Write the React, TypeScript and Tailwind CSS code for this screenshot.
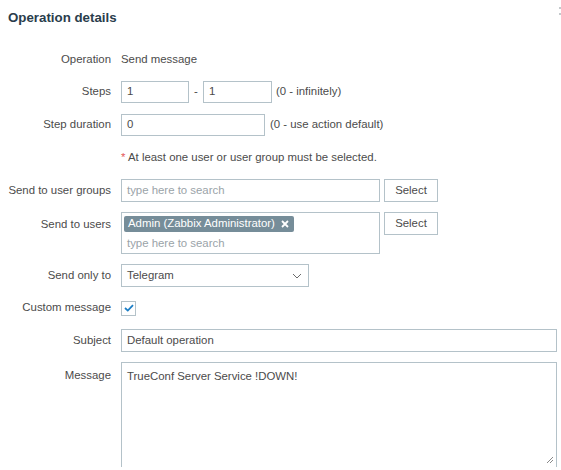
import React from "react";

const Label = ({ children }: { children: React.ReactNode }) => (
  <div className="w-[111px] shrink-0 text-right text-[#4b4b4b]">{children}</div>
);

export default function App() {
  return (
    <div className="relative w-[561px] h-[470px] overflow-hidden bg-white text-[11.4px] text-[#4b4b4b]" style={{ fontFamily: '"Liberation Sans", Arial, sans-serif' }}>
      <svg width="3" height="10" viewBox="0 0 3 10" className="absolute right-0 top-[6px]">
        <rect x="1" y="1" width="2" height="2" fill="#c4c9cc" />
        <rect x="1" y="7" width="2" height="2" fill="#c4c9cc" />
      </svg>
      <div className="pl-[8px] pt-[10px] text-[13.3px] font-bold text-[#2a3d4c] leading-[16px]">Operation details</div>
      <div className="flex flex-col">
        {/* Operation */}
        <div className="mt-[23px] flex h-[22px] items-center gap-[10px]">
          <Label>Operation</Label>
          <div>Send message</div>
        </div>
        {/* Steps */}
        <div className="mt-[10px] flex h-[22px] items-center gap-[10px]">
          <Label>Steps</Label>
          <div className="flex items-center">
            <div className="flex h-[22px] w-[68px] items-center border border-[#b4c2c9] pl-[5px]">1</div>
            <div className="w-[14px] text-center">-</div>
            <div className="flex h-[22px] w-[69px] items-center border border-[#b4c2c9] pl-[5px]">1</div>
            <div className="ml-[4px]">(0 - infinitely)</div>
          </div>
        </div>
        {/* Step duration */}
        <div className="mt-[11px] flex h-[22px] items-center gap-[10px]">
          <Label>Step duration</Label>
          <div className="flex items-center">
            <div className="flex h-[22px] w-[144px] items-center border border-[#b4c2c9] pl-[5px]">0</div>
            <div className="ml-[5px]">(0 - use action default)</div>
          </div>
        </div>
        {/* Asterisk */}
        <div className="mt-[11px] flex h-[22px] items-center gap-[10px]">
          <div className="w-[111px] shrink-0" />
          <div>
            <span className="text-[#e45959]">*</span> At least one user or user group must be selected.
          </div>
        </div>
        {/* User groups */}
        <div className="mt-[10px] flex h-[23px] items-center gap-[10px]">
          <Label>Send to user groups</Label>
          <div className="flex items-center gap-[4px]">
            <div className="flex h-[23px] w-[259px] items-center border border-[#b4c2c9] pl-[5px] text-[#9aa3a8]">type here to search</div>
            <div className="flex h-[23px] w-[54px] items-center justify-center border border-[#b4c2c9] text-[#4b4b4b]">Select</div>
          </div>
        </div>
        {/* Users */}
        <div className="mt-[10px] flex items-start gap-[10px]">
          <div className="w-[111px] shrink-0 pt-[4px] text-right">Send to users</div>
          <div className="flex items-start gap-[4px]">
            <div className="h-[42px] w-[259px] border border-[#b4c2c9] px-[2px] pt-[2px]">
              <div className="inline-flex h-[16px] items-center gap-[6px] rounded-[2px] bg-[#768d99] px-[4px] text-white">
                <span>Admin (Zabbix Administrator)</span>
                <svg width="8" height="8" viewBox="0 0 8 8" className="mr-[1px]">
                  <path d="M1 1L7 7M7 1L1 7" stroke="white" strokeWidth="1.8" />
                </svg>
              </div>
              <div className="mt-[3px] pl-[3px] text-[#9aa3a8]">type here to search</div>
            </div>
            <div className="flex h-[23px] w-[54px] items-center justify-center border border-[#b4c2c9] text-[#4b4b4b]">Select</div>
          </div>
        </div>
        {/* Send only to */}
        <div className="mt-[10px] flex h-[23px] items-center gap-[10px]">
          <Label>Send only to</Label>
          <div className="flex h-[23px] w-[188px] items-center justify-between border border-[#b4c2c9] pl-[5px] pr-[6px]">
            <span>Telegram</span>
            <svg width="10" height="6" viewBox="0 0 10 6">
              <path d="M1 1L5 5L9 1" fill="none" stroke="#6b6b6b" strokeWidth="1" />
            </svg>
          </div>
        </div>
        {/* Custom message */}
        <div className="mt-[10px] flex h-[22px] items-center gap-[10px]">
          <Label>Custom message</Label>
          <div className="flex h-[15px] w-[15px] items-center justify-center border border-[#b4c2c9]">
            <svg width="10" height="8" viewBox="0 0 10 8">
              <path d="M1 4L3.8 6.6L9 1.2" fill="none" stroke="#1b7ec6" strokeWidth="1.8" />
            </svg>
          </div>
        </div>
        {/* Subject */}
        <div className="mt-[10px] flex h-[23px] items-center gap-[10px]">
          <Label>Subject</Label>
          <div className="flex h-[23px] w-[436px] items-center border border-[#b4c2c9] pl-[5px]">Default operation</div>
        </div>
        {/* Message */}
        <div className="mt-[10px] flex items-start gap-[10px]">
          <div className="w-[111px] shrink-0 pt-[5px] text-right">Message</div>
          <div className="relative h-[105px] w-[436px] border-x border-t border-[#b4c2c9] pl-[5px] pt-[5px]">
            TrueConf Server Service !DOWN!
            <svg width="8" height="8" viewBox="0 0 8 8" className="absolute right-[2px] top-[93px]">
              <path d="M7 1L1 7M7 4L4 7" stroke="#8a8a8a" strokeWidth="1" />
            </svg>
          </div>
        </div>
      </div>
    </div>
  );
}
